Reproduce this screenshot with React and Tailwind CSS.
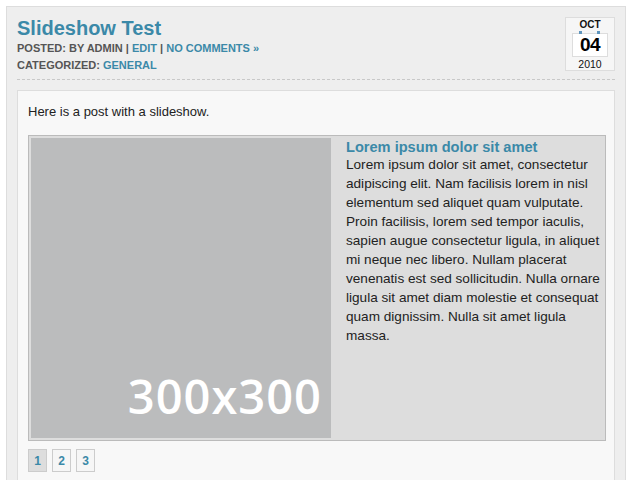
import React from "react";

const bodyText =
  "Lorem ipsum dolor sit amet, consectetur adipiscing elit. Nam facilisis lorem in nisl elementum sed aliquet quam vulputate. Proin facilisis, lorem sed tempor iaculis, sapien augue consectetur ligula, in aliquet mi neque nec libero. Nullam placerat venenatis est sed sollicitudin. Nulla ornare ligula sit amet diam molestie et consequat quam dignissim. Nulla sit amet ligula massa.";

export default function App() {
  return (
    <div className="bg-white w-[631px] h-[480px] overflow-hidden pt-[6px] pl-[6px] font-['Liberation_Sans',Arial,sans-serif]">
      <div className="w-[620px] h-[500px] bg-[#eeeeee] border border-[#dddddd] p-[10px]">
        {/* Header */}
        <div className="flex justify-between border-b border-dashed border-[#c8c8c8] pb-[5px]">
          <div>
            <h1 className="text-[20px] leading-[22px] font-bold text-[#3b89a8]">Slideshow Test</h1>
            <div className="mt-[1px] text-[11px] leading-[17px] font-bold uppercase text-[#555555]">
              <div>
                Posted: By admin | <span className="text-[#3b89a8]">Edit</span> |{" "}
                <span className="text-[#3b89a8]">No Comments »</span>
              </div>
              <div>
                Categorized: <span className="text-[#3b89a8]">General</span>
              </div>
            </div>
          </div>
          <div className="w-[50px] h-[54px] bg-[#f6f6f6] border border-[#dddddd] pt-[1px] flex flex-col items-center">
            <div className="text-[10px] leading-[11px] font-bold text-[#111111]">OCT</div>
            <div className="relative mt-[3px] w-[36px] h-[24px] bg-white border border-[#dddddd] flex items-center justify-center">
              <span className="absolute top-[-3px] left-[6px] w-[3px] h-[3px] bg-[#5f95bd]"></span>
              <span className="absolute top-[-3px] right-[7px] w-[3px] h-[3px] bg-[#5f95bd]"></span>
              <span className="text-[19px] leading-[22px] font-bold tracking-[-0.5px] text-black">04</span>
            </div>
            <div className="mt-[1px] text-[10.5px] leading-[12px] text-[#111111]">2010</div>
          </div>
        </div>

        {/* Content box */}
        <div className="mt-[10px] bg-[#f8f8f8] border border-[#dddddd] px-[10px] pt-[11px] pb-[20px]">
          <p className="text-[13px] leading-[19px] text-[#222222]">Here is a post with a slideshow.</p>
          <div className="mt-[14px] w-[578px] bg-[#dddddd] border border-[#bbbbbb] p-[2px] flex">
            <div className="w-[300px] h-[300px] shrink-0 bg-[#bbbcbd] flex items-end justify-end pr-[9px] pb-[19px]">
              <span className="font-['Open_Sans',sans-serif] font-semibold text-[47px] leading-[46px] tracking-[1px] text-white">300x300</span>
            </div>
            <div className="ml-[15px] w-[255px] text-[#222222]">
              <div className="text-[14.6px] leading-[18px] font-bold text-[#3b89a8]">Lorem ipsum dolor sit amet</div>
              <p className="-mt-[1px] text-[13.6px] leading-[19px]">{bodyText}</p>
            </div>
          </div>
          <div className="mt-[8px] flex gap-[5px]">
            {["1", "2", "3"].map((n, i) => (
              <div
                key={n}
                className={
                  "w-[19px] h-[23px] border border-[#cccccc] flex items-center justify-center text-[12px] font-bold text-[#3b89a8] " +
                  (i === 0 ? "bg-[#dddddd]" : "bg-[#f6f6f6]")
                }
              >
                {n}
              </div>
            ))}
          </div>
        </div>
      </div>
    </div>
  );
}
